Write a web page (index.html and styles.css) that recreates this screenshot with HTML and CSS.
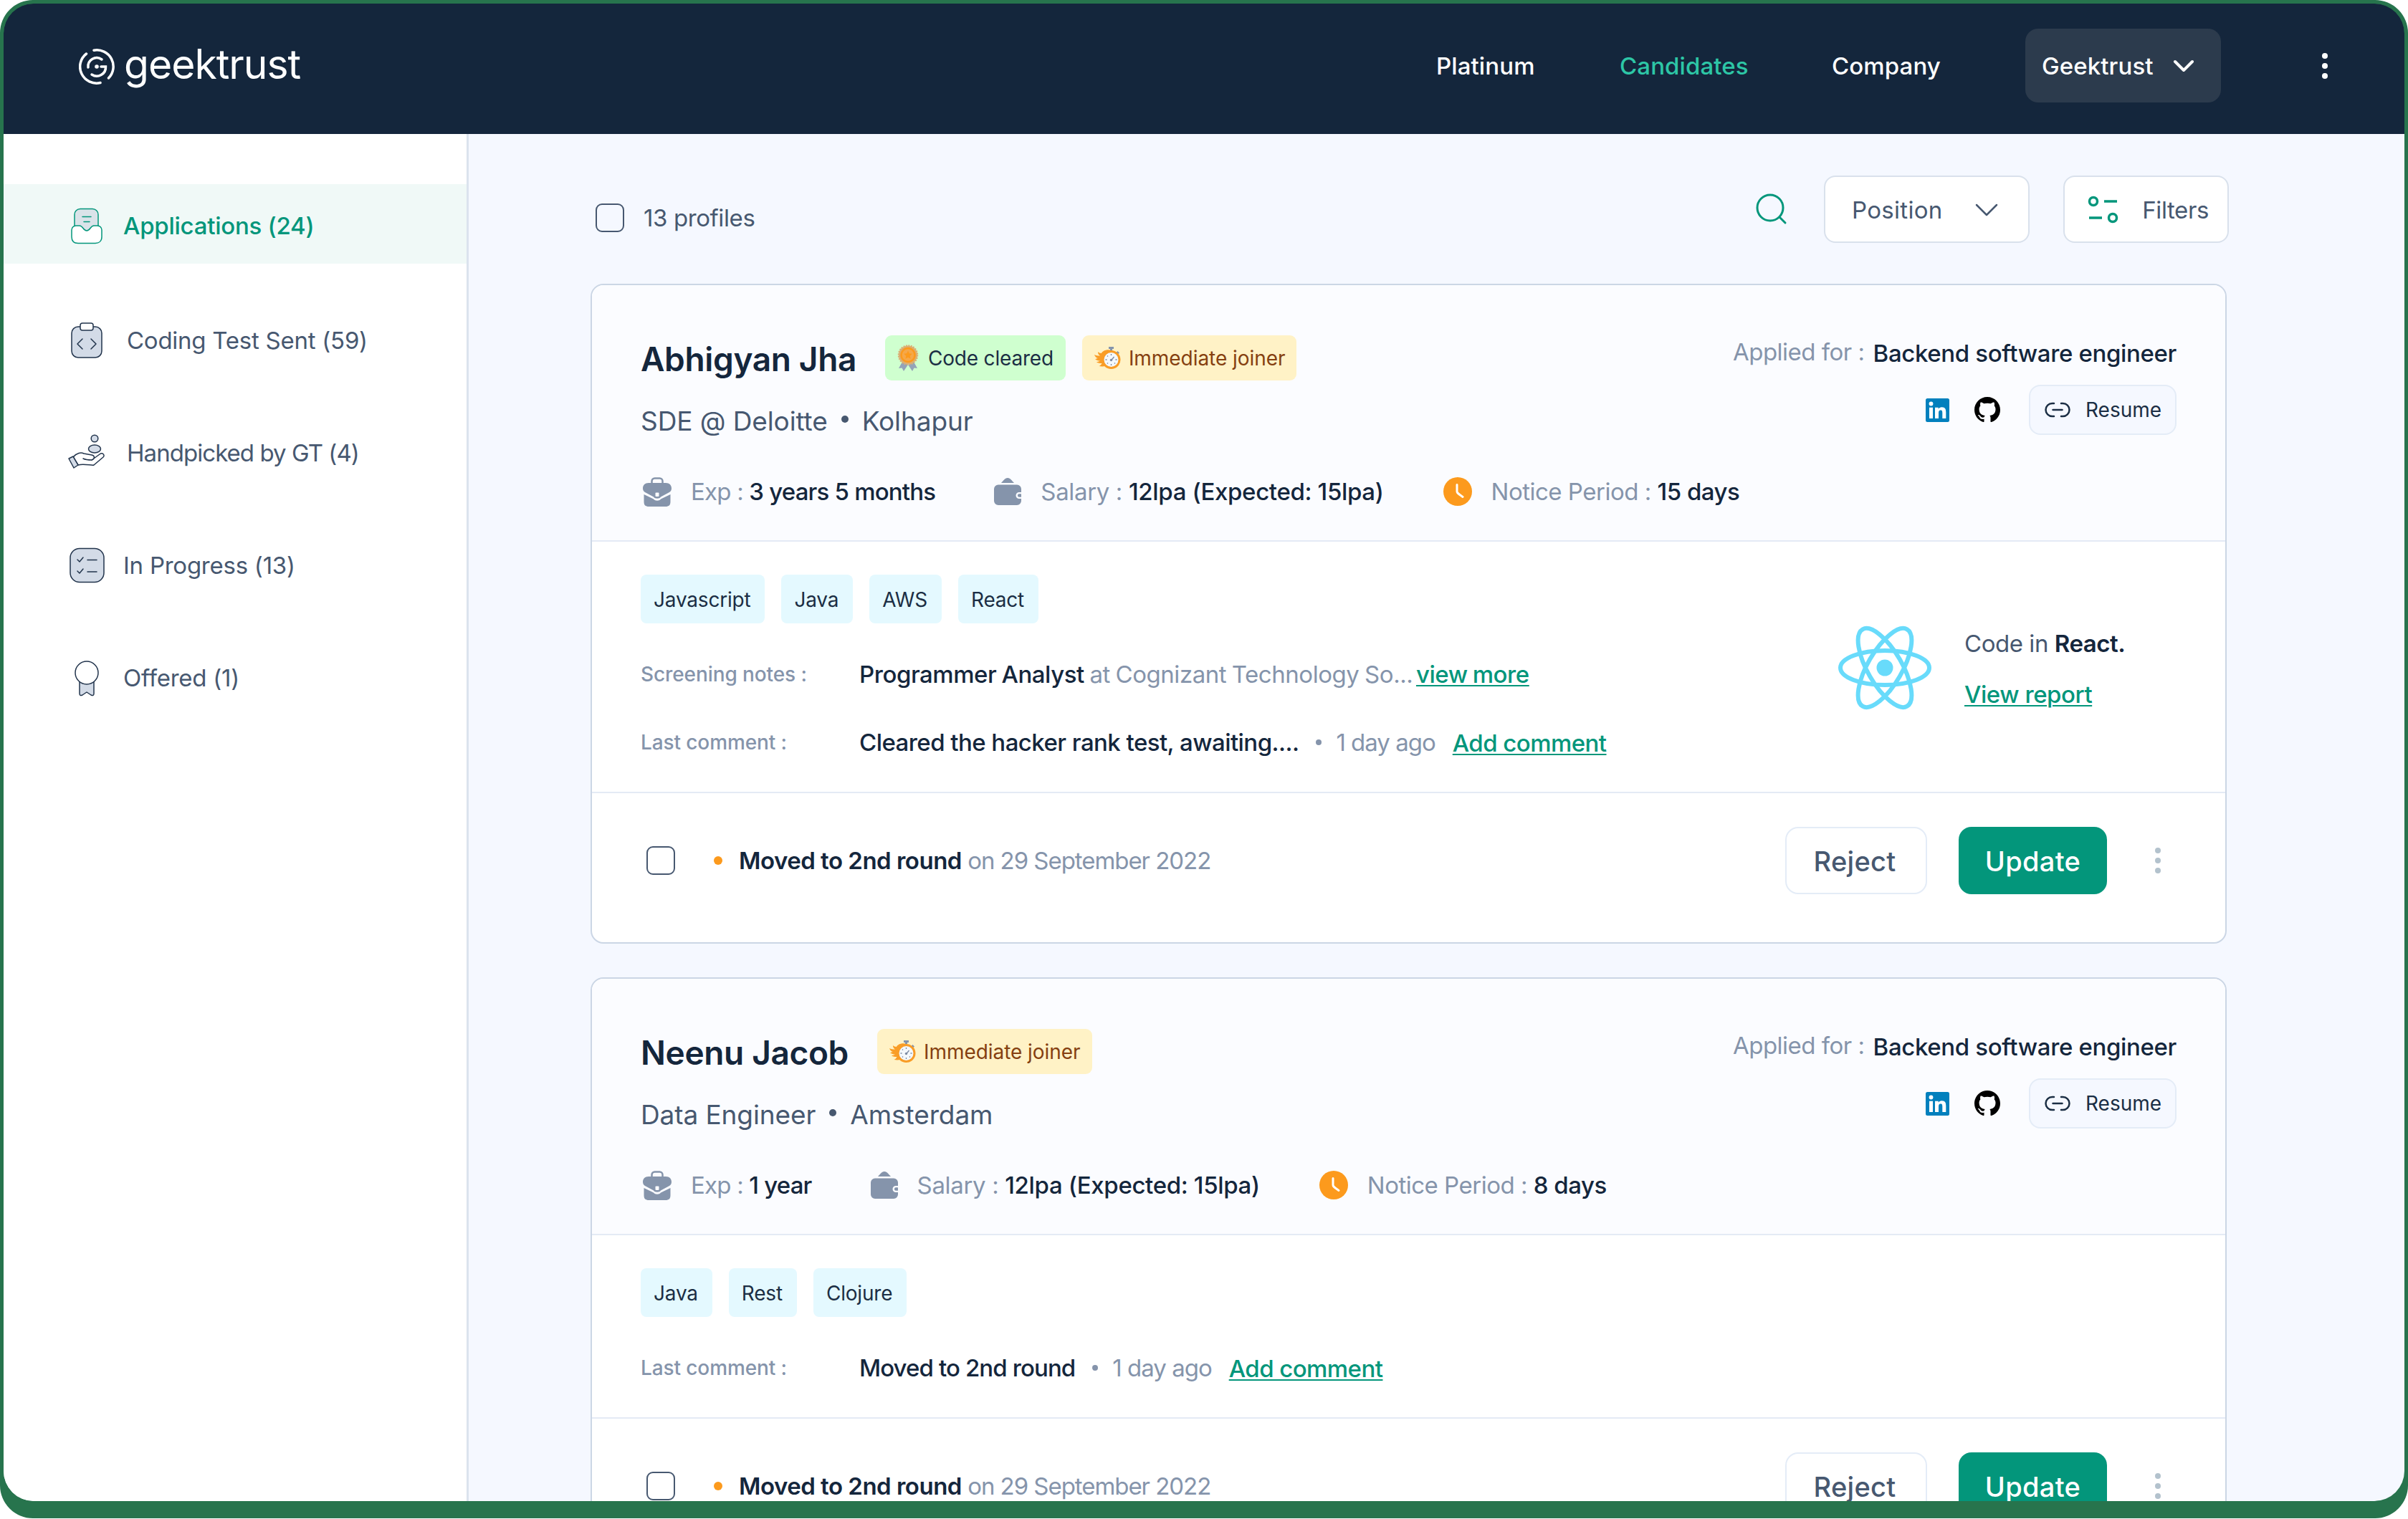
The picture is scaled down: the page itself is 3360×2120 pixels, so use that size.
FILE: index.html
```html
<!DOCTYPE html>
<html lang="en">
<head>
    <meta charset="UTF-8">
    <meta name="viewport" content="width=device-width, initial-scale=1.0">
    <title>Geektrust - Candidates</title>
    <link rel="stylesheet" href="styles.css">
</head>
<body>
    <!-- shared icons -->
    <svg class="sprite">
        <symbol id="medal" viewBox="0 0 30 38">
            <path d="M7 24l-5 9 4.500-.5L9 37l6-9zM23 24l5 9-4.500-.5L21 37l-6-9z" fill="#94a3b8"/>
            <circle cx="15" cy="14.500" r="13" fill="#dcae72" stroke="#dcae72" stroke-width="2.500" stroke-dasharray="2 1.400"/>
            <circle cx="15" cy="14.500" r="9.500" fill="#f5a84a" stroke="#fc9a1d" stroke-width="2.500"/>
            <path d="M15 8.500l1.800 3.800 4 .5-3 2.900.8 4.100-3.600-2-3.600 2 .8-4.100-3-2.900 4-.5z" fill="#fc9a1d"/>
        </symbol>
        <symbol id="stopwatch" viewBox="0 0 37 32">
            <path d="M24 5C17 3 11 6 10 9c-2 0-4-1-5-2 0 3 1 4 3 5.500-3 0-6-.5-8-1.500 1 3 3 4.500 5 5-2 .5-3 1-4 1 2 2 5 2.500 7 2.500-2 1-3 1.500-5 1.500 2 2 6 2 7.500 2-1 2-2 3-4 4 6 1 9 0 11-1z" fill="#f99d27"/>
            <path d="M20 0h7v3h-2v3h-3V3h-2zM32.500 6l2.500 2.500-2 2-2.500-2.500z" fill="#8594ab"/>
            <circle cx="23.500" cy="18" r="11.500" fill="#f4f8fc" stroke="#f99d27" stroke-width="3"/>
            <path d="M23.500 19l4-5M23.500 10v2M23.500 24v2M15.500 18h2M29.500 18h2M18 12.500l1 1M18 23.500l1-1M29 23.500l-1-1" stroke="#7b8aa3" stroke-width="1.300" fill="none"/>
            <circle cx="23.500" cy="18.500" r="1.700" fill="#7b8aa3"/>
        </symbol>
        <symbol id="briefcase" viewBox="0 0 40 41">
            <path d="M12.500 9V5.500a4 4 0 0 1 4-4h7a4 4 0 0 1 4 4V9" fill="none" stroke="#8594ab" stroke-width="2.500"/>
            <path d="M8 8h24c5 0 8 3 8 7.500 0 2.500-1 4.500-3 5.500l-12 6.500c-1.500 3-8.500 3-10 0L3 21c-2-1-3-3-3-5.500C0 11 3 8 8 8z" fill="#8594ab"/>
            <rect x="17.500" y="21.500" width="5" height="5.500" rx="1" fill="#fbfcff"/>
            <path d="M1.500 24L15 30.500c2 3 8 3 10 0L38.500 24v10c0 5-2 7-7 7h-23c-5 0-7-2-7-7z" fill="#8594ab"/>
        </symbol>
        <symbol id="wallet" viewBox="0 0 38 38">
            <path d="M10 7c3-3 5-7 9-7s6 4 9 7z" fill="#8594ab"/>
            <path d="M6 9.500h26a6 6 0 0 1 6 6V20h-3a4.500 4.500 0 0 0 0 9h3v3a6 6 0 0 1-6 6H6a6 6 0 0 1-6-6V15.500a6 6 0 0 1 6-6z" fill="#8594ab"/>
            <rect x="33" y="22.300" width="6" height="4.500" rx="2" fill="#8594ab"/>
        </symbol>
        <symbol id="clock" viewBox="0 0 40 40">
            <circle cx="20" cy="20" r="20" fill="#fc9a1d"/>
            <path d="M19 10.500V20c0 2 1.500 3 8 7.500" fill="none" stroke="#fff" stroke-width="3" stroke-linecap="round"/>
        </symbol>
        <symbol id="linkedin" viewBox="0 0 33 33">
            <rect width="33" height="33" rx="2.500" fill="#0280bd"/>
            <circle cx="7.500" cy="7.500" r="2.900" fill="#fff"/>
            <path d="M5 12.700h5V28H5zM13 12.700h4.700v2.100c1-1.600 2.600-2.500 4.800-2.500 4.900 0 5.800 3.100 5.800 7.200V28h-5v-7.500c0-1.800-.1-4-2.500-4s-2.800 1.900-2.800 3.900V28h-5z" fill="#fff"/>
        </symbol>
        <symbol id="github" viewBox="0 0 16 16">
            <path fill="#000" d="M8 0C3.580 0 0 3.580 0 8c0 3.540 2.290 6.530 5.470 7.590.4.070.55-.17.55-.38 0-.19-.01-.82-.01-1.490-2.010.37-2.530-.49-2.690-.94-.09-.23-.48-.94-.82-1.130-.28-.15-.68-.52-.01-.53.63-.01 1.080.58 1.230.82.72 1.210 1.870.87 2.330.66.070-.52.28-.87.51-1.070-1.780-.2-3.640-.89-3.640-3.950 0-.87.31-1.590.82-2.150-.08-.2-.36-1.020.08-2.120 0 0 .67-.21 2.200.82.64-.18 1.320-.27 2-.27s1.360.09 2 .27c1.530-1.040 2.200-.82 2.200-.82.44 1.100.16 1.920.08 2.120.51.560.82 1.270.82 2.150 0 3.070-1.870 3.750-3.650 3.950.29.25.54.73.54 1.480 0 1.070-.01 1.930-.01 2.200 0 .21.15.46.55.38A8.010 8.010 0 0 0 16 8c0-4.420-3.580-8-8-8z"/>
        </symbol>
        <symbol id="link" viewBox="0 0 36 22">
            <path d="M13 2h-2.500a9 9 0 0 0 0 18H13M23 2h2.500a9 9 0 0 1 0 18H23M11.500 11h13" fill="none" stroke="#1b2e44" stroke-width="2.500" stroke-linecap="round"/>
        </symbol>
        <symbol id="dots" viewBox="0 0 10 38">
            <circle cx="5" cy="5" r="4"/><circle cx="5" cy="19" r="4"/><circle cx="5" cy="33" r="4"/>
        </symbol>
    </svg>

    <div class="window">
        <header>
            <div class="logo">
                <svg width="50" height="50" viewBox="0 0 50 50" fill="none" stroke="#fff" stroke-width="3.500" stroke-linecap="round">
                    <path d="M21 2.200A23 23 0 0 1 41.500 41M30 47.500A23 23 0 0 1 10.500 7"/>
                    <path d="M13 26a12 12 0 0 1 19-11M18 36a12.500 12.500 0 0 0 19.500-11H31"/>
                    <circle cx="25" cy="25" r="2.800" fill="#fff" stroke="none"/>
                </svg>
                <span>geektrust</span>
            </div>
            <nav>
                <ul>
                    <li class="nav-platinum"><a>Platinum</a></li>
                    <li class="nav-candidates active"><a>Candidates</a></li>
                    <li class="nav-company"><a>Company</a></li>
                </ul>
                <button class="account">Geektrust
                    <svg width="30" height="18" viewBox="0 0 30 18"><path d="M3 3l12 12L27 3" fill="none" stroke="#fff" stroke-width="4" stroke-linecap="round" stroke-linejoin="round"/></svg>
                </button>
                <svg class="nav-dots" width="10" height="38"><use href="#dots"/></svg>
            </nav>
        </header>

        <div class="content">
            <aside>
                <a class="side-link active">
                    <svg width="56" height="56" viewBox="0 0 56 56" stroke="#03967b" stroke-width="1.500">
                        <rect x="11" y="4.500" width="33" height="40" rx="8" fill="#dae3e9"/>
                        <path d="M22 15.500h12M24 22.500h8" stroke-linecap="round"/>
                        <path d="M13 28h5c5 0 5 7 10 7s5-7 10-7h5a6 6 0 0 1 6 6v9.500c0 6-4 9-9 9H16c-6 0-9-3-9-9V34a6 6 0 0 1 6-6z" fill="#fff"/>
                    </svg>
                    <span>Applications (24)</span>
                </a>
                <a class="side-link indent">
                    <svg width="56" height="56" viewBox="0 0 56 56" stroke="#22344c" stroke-width="1.500" stroke-linejoin="round" stroke-linecap="round">
                        <rect x="7" y="9" width="42" height="43" rx="9" fill="#d3dbe7"/>
                        <rect x="19" y="4" width="18" height="10" rx="3" fill="#fff"/>
                        <path d="M22 26l-7 7 7 7M34 26l7 7-7 7" fill="none"/>
                    </svg>
                    <span>Coding Test Sent (59)</span>
                </a>
                <a class="side-link indent handpicked">
                    <svg width="56" height="56" viewBox="0 0 56 56" stroke="#22344c" stroke-width="1.500" stroke-linejoin="round" stroke-linecap="round" fill="#d3dbe7">
                        <circle cx="39" cy="8" r="4.800"/>
                        <ellipse cx="39" cy="22.500" rx="8.500" ry="5.500"/>
                        <path d="M9 34c5-6 11-7 15-5l11 2c5 1 4 6 0 7l11-8c4-3 8 1 5 4L38 45c-2 1-14-2-22 0z" fill="#fff"/>
                        <path d="M23 36c4 2 8 2 12 2" fill="none"/>
                        <path d="M3 36l6-3 7 12-6 4z"/>
                    </svg>
                    <span>Handpicked by GT (4)</span>
                </a>
                <a class="side-link">
                    <svg width="56" height="56" viewBox="0 0 56 56" stroke="#22344c" stroke-width="1.500" stroke-linejoin="round" stroke-linecap="round">
                        <rect x="5" y="4.500" width="47" height="47" rx="13" fill="#d3dbe7"/>
                        <path d="M15 20l3 3 5-6M15 36l3 3 5-6M29 20.500h13M29 37h13" fill="none"/>
                    </svg>
                    <span>In Progress (13)</span>
                </a>
                <a class="side-link">
                    <svg width="56" height="56" viewBox="0 0 56 56" stroke="#22344c" stroke-width="1.500" stroke-linejoin="round">
                        <path d="M18 31v19c0 3 2 3 4 2l6-4 6 4c2 1 4 1 4-2V31z" fill="#d3dbe7"/>
                        <circle cx="28" cy="21" r="16" fill="#fff"/>
                    </svg>
                    <span>Offered (1)</span>
                </a>
            </aside>

            <main>
                <div class="toolbar">
                    <div class="select-all">
                        <span class="checkbox"></span>
                        <span>13 profiles</span>
                    </div>
                    <div class="tools">
                        <svg class="search" width="44" height="44" viewBox="0 0 44 44"><circle cx="20" cy="20" r="18" fill="none" stroke="#03967b" stroke-width="3"/><path d="M33 33l8 8" stroke="#03967b" stroke-width="3" stroke-linecap="round"/></svg>
                        <button class="tool position">Position
                            <svg width="32" height="18" viewBox="0 0 32 18"><path d="M2 2l14 14L30 2" fill="none" stroke="#475870" stroke-width="2.500" stroke-linecap="round" stroke-linejoin="round"/></svg>
                        </button>
                        <button class="tool filters">
                            <svg width="44" height="40" viewBox="0 0 44 40" fill="none" stroke="#03967b" stroke-width="3.500"><circle cx="8" cy="8" r="5.500"/><path d="M23 8h18M2 31h18"/><circle cx="35" cy="31" r="5.500"/></svg>
                            Filters
                        </button>
                    </div>
                </div>

                <article class="card">
                    <div class="card-head">
                        <div class="person">
                            <div class="name-row">
                                <h2>Abhigyan Jha</h2>
                                <span class="badge cleared"><svg width="30" height="38"><use href="#medal"/></svg>Code cleared</span>
                                <span class="badge joiner"><svg width="37" height="32"><use href="#stopwatch"/></svg>Immediate joiner</span>
                            </div>
                            <p class="job">SDE @ Deloitte <i></i> Kolhapur</p>
                            <div class="stats">
                                <div class="stat exp"><svg width="40" height="41"><use href="#briefcase"/></svg><span>Exp : <b>3 years 5 months</b></span></div>
                                <div class="stat salary"><svg width="38" height="38"><use href="#wallet"/></svg><span>Salary : <b>12lpa (Expected: 15lpa)</b></span></div>
                                <div class="stat"><svg width="40" height="40"><use href="#clock"/></svg><span>Notice Period : <b>15 days</b></span></div>
                            </div>
                        </div>
                        <div class="applied">
                            <p>Applied for : <b>Backend software engineer</b></p>
                            <div class="profiles">
                                <svg width="33" height="33"><use href="#linkedin"/></svg>
                                <svg class="github" width="36" height="36"><use href="#github"/></svg>
                                <button class="resume"><svg width="36" height="22"><use href="#link"/></svg>Resume</button>
                            </div>
                        </div>
                    </div>
                    <div class="card-body">
                        <div class="details">
                            <div class="tags">
                                <span>Javascript</span><span>Java</span><span>AWS</span><span>React</span>
                            </div>
                            <div class="note screening">
                                <label>Screening notes :</label>
                                <p><b>Programmer Analyst</b> at Cognizant Technology So... <a class="more">view more</a></p>
                            </div>
                            <div class="note">
                                <label>Last comment :</label>
                                <p><b>Cleared the hacker rank test, awaiting....</b><i></i><span class="ago">1 day ago</span><a>Add comment</a></p>
                            </div>
                        </div>
                        <div class="report">
                            <svg width="132" height="118" viewBox="-66 -59 132 118" fill="none" stroke="#68dbfb" stroke-width="6">
                                <ellipse rx="62" ry="24"/>
                                <ellipse rx="62" ry="24" transform="rotate(60)"/>
                                <ellipse rx="62" ry="24" transform="rotate(120)"/>
                                <circle r="11.500" fill="#68dbfb" stroke="none"/>
                            </svg>
                            <div>
                                <p>Code in <b>React.</b></p>
                                <a>View report</a>
                            </div>
                        </div>
                    </div>
                    <div class="card-foot">
                        <span class="checkbox"></span>
                        <span class="status"></span>
                        <p><b>Moved to 2nd round</b> on 29 September 2022</p>
                        <button class="reject">Reject</button>
                        <button class="update">Update</button>
                        <svg class="foot-dots" width="10" height="38"><use href="#dots"/></svg>
                    </div>
                </article>

                <article class="card">
                    <div class="card-head">
                        <div class="person">
                            <div class="name-row">
                                <h2>Neenu Jacob</h2>
                                <span class="badge joiner"><svg width="37" height="32"><use href="#stopwatch"/></svg>Immediate joiner</span>
                            </div>
                            <p class="job">Data Engineer <i></i> Amsterdam</p>
                            <div class="stats">
                                <div class="stat exp"><svg width="40" height="41"><use href="#briefcase"/></svg><span>Exp : <b>1 year</b></span></div>
                                <div class="stat salary"><svg width="38" height="38"><use href="#wallet"/></svg><span>Salary : <b>12lpa (Expected: 15lpa)</b></span></div>
                                <div class="stat"><svg width="40" height="40"><use href="#clock"/></svg><span>Notice Period : <b>8 days</b></span></div>
                            </div>
                        </div>
                        <div class="applied">
                            <p>Applied for : <b>Backend software engineer</b></p>
                            <div class="profiles">
                                <svg width="33" height="33"><use href="#linkedin"/></svg>
                                <svg class="github" width="36" height="36"><use href="#github"/></svg>
                                <button class="resume"><svg width="36" height="22"><use href="#link"/></svg>Resume</button>
                            </div>
                        </div>
                    </div>
                    <div class="card-body">
                        <div class="details">
                            <div class="tags">
                                <span>Java</span><span>Rest</span><span>Clojure</span>
                            </div>
                            <div class="note">
                                <label>Last comment :</label>
                                <p><b class="short">Moved to 2nd round</b><i></i><span class="ago">1 day ago</span><a>Add comment</a></p>
                            </div>
                        </div>
                    </div>
                    <div class="card-foot">
                        <span class="checkbox"></span>
                        <span class="status"></span>
                        <p><b>Moved to 2nd round</b> on 29 September 2022</p>
                        <button class="reject">Reject</button>
                        <button class="update">Update</button>
                        <svg class="foot-dots" width="10" height="38"><use href="#dots"/></svg>
                    </div>
                </article>
            </main>
        </div>
    </div>
</body>
</html>
```

FILE: styles.css
```css
* {
    box-sizing: border-box;
}

body {
    font-family: Inter, "Liberation Sans", sans-serif;
    font-size: 33px;
    margin: 0;
    padding: 0;
    background: #fff;
    color: #475870;
    letter-spacing: -0.5px;
}

h2, p, ul {
    margin: 0;
    padding: 0;
}

svg {
    display: block;
    flex-shrink: 0;
}

button {
    font: inherit;
    letter-spacing: inherit;
    color: inherit;
    padding: 0;
    display: flex;
    align-items: center;
}

.sprite {
    position: absolute;
    width: 0;
    height: 0;
}

.window {
    height: 2119px;
    background: #27744d;
    border: 5px solid #27744d;
    border-bottom-width: 24px;
    border-radius: 46px;
    overflow: hidden;
}

header {
    height: 182px;
    background: #14263c;
    border-radius: 42px 42px 0 0;
    color: #fff;
    display: flex;
    justify-content: space-between;
    padding: 0 106px 0 105px;
}

.logo {
    display: flex;
    align-items: center;
    gap: 13px;
    height: 176px;
}

.logo span {
    font-size: 57px;
    line-height: 60px;
    font-weight: 400;
    letter-spacing: -1px;
    padding-bottom: 6px;
}

nav {
    display: flex;
    align-items: center;
    height: 173px;
    font-weight: 500;
    letter-spacing: 0.1px;
}

nav ul {
    list-style: none;
    display: flex;
}

nav li.active {
    color: #2dc6a6;
}

.nav-platinum {
    width: 256px;
}

.nav-candidates {
    width: 296px;
}

.nav-company {
    width: 270px;
}

.account {
    width: 273px;
    height: 103px;
    padding: 0 37px 0 23px;
    justify-content: space-between;
    border: none;
    border-radius: 18px;
    background: #2c3b4d;
}

.nav-dots {
    fill: #fff;
    margin-left: 140px;
}

.content {
    display: flex;
    height: 1908px;
    overflow: hidden;
    border-radius: 0 0 42px 42px;
    background: #f5f8ff;
}

aside {
    width: 649px;
    padding-top: 70px;
    background: #fff;
    border-right: 3px solid #dbe3ee;
    letter-spacing: -0.25px;
}

.side-link {
    display: flex;
    align-items: center;
    gap: 23px;
    height: 111px;
    margin-bottom: 46px;
    padding: 4px 0 0 88px;
}

.side-link span {
    padding-top: 1px;
}

.side-link.indent {
    gap: 28px;
}

.side-link.handpicked {
    letter-spacing: -0.95px;
}

.side-link.active {
    margin-bottom: 49px;
    background: #f0f9f7;
    color: #03967b;
    font-weight: 500;
}

main {
    width: 2283px;
    margin-left: 170px;
}

.toolbar {
    display: flex;
    justify-content: space-between;
    height: 209px;
    padding-top: 58px;
    letter-spacing: -0.4px;
}

.select-all {
    display: flex;
    align-items: center;
    gap: 27px;
    height: 117px;
    padding-left: 7px;
}

.checkbox {
    display: block;
    width: 40px;
    height: 40px;
    border: 2.5px solid #475870;
    border-radius: 9px;
}

.tools {
    display: flex;
    align-items: center;
    height: 94px;
    margin-right: -3px;
}

.tool {
    height: 94px;
    background: #fff;
    border: 2.5px solid #d9e1ec;
    border-radius: 16px;
    justify-content: space-between;
}

.position {
    width: 287px;
    margin: 0 47px 0 51px;
    padding: 1px 42px 0 37px;
    letter-spacing: 0.3px;
}

.filters {
    width: 231px;
    padding: 1px 26px 0 32px;
}

.card {
    margin-bottom: 47px;
    border: 2.5px solid #cbd6e5;
    border-radius: 18px;
    background: #fff;
    overflow: hidden;
}

.card-head {
    display: flex;
    height: 358px;
    padding: 70px 68px 0;
    background: #fbfcff;
    border-bottom: 2.5px solid #e4eaf5;
    white-space: nowrap;
}

.card b {
    font-weight: 500;
    color: #14263c;
}

.person {
    flex: 1;
    width: 0;
}

.name-row {
    display: flex;
    height: 63px;
    margin-bottom: 33px;
}

h2 {
    font-size: 46px;
    line-height: 66px;
    font-weight: 600;
    letter-spacing: -0.35px;
    color: #14263c;
    margin-right: 40px;
}

.badge {
    display: flex;
    align-items: center;
    gap: 13px;
    height: 63px;
    margin-right: 23px;
    padding: 0 17px;
    border-radius: 9px;
    font-size: 28px;
}

.cleared {
    background: #cfffcf;
    color: #1b2e44;
    letter-spacing: -0.2px;
}

.joiner {
    background: #fff2c6;
    color: #854010;
    gap: 11px;
    padding-right: 16px;
    letter-spacing: -0.05px;
}

.job {
    display: flex;
    align-items: center;
    font-size: 37px;
    line-height: 47px;
    letter-spacing: -0.1px;
}

.job i {
    width: 10px;
    height: 10px;
    margin: 0 19px;
    margin-bottom: 6px;
    border-radius: 50%;
    background: #475870;
}

.stats {
    display: flex;
    align-items: center;
    gap: 82px;
    height: 50px;
    margin-top: 50px;
    padding-left: 3px;
    color: #8594ab;
}

.stat {
    display: flex;
    align-items: center;
    gap: 27px;
}

.exp {
    letter-spacing: -0.8px;
}

.salary {
    margin-right: 1px;
    letter-spacing: -0.35px;
}

.applied {
    display: flex;
    flex-direction: column;
    align-items: flex-end;
    color: #8594ab;
}

.applied p {
    display: flex;
    gap: 12px;
    line-height: 46px;
    margin-bottom: 23px;
}

.applied b {
    letter-spacing: -0.35px;
    padding-top: 2px;
    margin-bottom: -2px;
}

.profiles {
    display: flex;
    align-items: center;
    gap: 35px;
}

.github {
    margin-right: 5px;
}

.resume {
    width: 206px;
    height: 70px;
    gap: 21px;
    padding-left: 20px;
    border: 2.5px solid #e4ecf7;
    border-radius: 16px;
    background: #f5f8ff;
    color: #1b2e44;
    font-size: 28px;
    letter-spacing: 0;
}

.card-body {
    display: flex;
    justify-content: space-between;
    padding: 46px 68px 45px;
    border-bottom: 2.5px solid #e4eaf5;
}

.tags {
    display: flex;
    gap: 23px;
    margin-bottom: 47px;
}

.tags span {
    height: 68px;
    line-height: 70px;
    padding: 0 20px 0 18px;
    border-radius: 8px;
    background: #e4f9ff;
    color: #1b2e44;
    font-size: 28px;
    letter-spacing: -0.2px;
}

.note {
    display: flex;
    align-items: center;
    height: 48px;
    color: #8594ab;
}

.screening {
    margin-bottom: 47px;
}

.note label {
    width: 305px;
    font-size: 28px;
    font-weight: 500;
    letter-spacing: -0.1px;
}

.note p {
    display: flex;
    align-items: center;
    white-space: pre;
    letter-spacing: -0.55px;
}

.note.screening p {
    letter-spacing: -0.45px;
    word-spacing: -1.2px;
}

.note .short {
    letter-spacing: -0.9px;
}

.note .ago {
    letter-spacing: -1px;
}

.note i {
    width: 8px;
    height: 8px;
    margin: 0 20px 0 24px;
    border-radius: 50%;
    background: #8594ab;
}

.note a {
    margin-left: 24px;
    padding-top: 2px;
}

.note .more {
    margin-left: -3px;
    padding-top: 0;
}

.note a, .report a {
    color: #03967b;
    font-weight: 500;
    text-decoration: underline;
    text-decoration-thickness: 2px;
    text-underline-offset: 3px;
}

.report {
    display: flex;
    align-items: center;
    gap: 45px;
    width: 473px;
    padding-top: 1px;
    letter-spacing: -0.45px;
}

.report p {
    margin: 4px 0 31px;
}

.card-foot p b, .report b {
    font-weight: 600;
}

.card-foot {
    display: flex;
    align-items: center;
    height: 208px;
    padding: 0 89px 20px 76px;
    color: #8594ab;
}

.card-foot p {
    flex: 1;
    letter-spacing: -1.05px;
}

.card-foot p b {
    letter-spacing: -0.5px;
}

.status {
    width: 12px;
    height: 12px;
    margin: 0 23px 0 54px;
    border-radius: 50%;
    background: #fc9a1d;
}

.reject, .update {
    justify-content: center;
    height: 94px;
    padding-top: 2px;
    border-radius: 18px;
    font-size: 38px;
    font-weight: 500;
    letter-spacing: 0.3px;
}

.reject {
    width: 198px;
    padding-right: 4px;
    background: #fff;
    border: 2.5px solid #e4ecf7;
    color: #475870;
}

.update {
    width: 207px;
    margin: 0 66px 0 44px;
    background: #03967b;
    border: none;
    color: #fff;
}

.foot-dots {
    fill: #b3c2cd;
}
```
